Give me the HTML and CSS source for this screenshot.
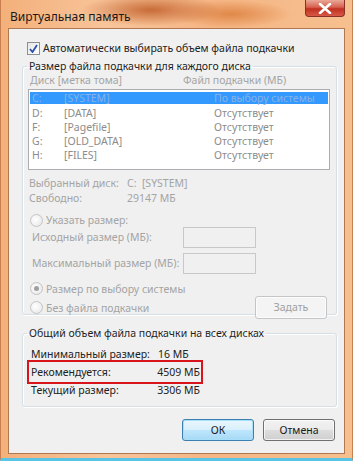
FILE: index.html
```html
<!DOCTYPE html>
<html lang="ru">
<head>
    <meta charset="UTF-8">
    <title>Виртуальная память</title>
    <link rel="stylesheet" href="styles.css">
</head>
<body>
    <div class="window">
        <div class="titlebar">
            <span class="title">Виртуальная память</span>
            <div class="close-btn">
                <svg width="14" height="11" viewBox="0 0 14 11">
                    <path d="M2 1 L12 10 M12 1 L2 10" stroke="#fff" stroke-width="2.6" stroke-linecap="round"/>
                </svg>
            </div>
        </div>

        <div class="client">
            <!-- auto checkbox -->
            <div class="check-row">
                <span class="checkbox">
                    <svg width="9" height="9" viewBox="0 0 9 9">
                        <path d="M1 5 L3.5 8 L8 1" stroke="#2a50a8" stroke-width="1.8" fill="none"/>
                    </svg>
                </span>
                <span>Автоматически выбирать объем файла подкачки</span>
            </div>

            <!-- per drive group -->
            <fieldset class="group group-drives">
                <legend>Размер файла подкачки для каждого диска</legend>
                <div class="list-head">
                    <span class="col-drive">Диск [метка тома]</span>
                    <span class="col-file">Файл подкачки (МБ)</span>
                </div>
                <div class="listbox">
                    <div class="list-row selected">
                        <span class="c1">C:</span><span class="c2">[SYSTEM]</span><span class="c3">По выбору системы</span>
                    </div>
                    <div class="list-row">
                        <span class="c1">D:</span><span class="c2">[DATA]</span><span class="c3">Отсутствует</span>
                    </div>
                    <div class="list-row">
                        <span class="c1">F:</span><span class="c2">[Pagefile]</span><span class="c3">Отсутствует</span>
                    </div>
                    <div class="list-row">
                        <span class="c1">G:</span><span class="c2">[OLD_DATA]</span><span class="c3">Отсутствует</span>
                    </div>
                    <div class="list-row">
                        <span class="c1">H:</span><span class="c2">[FILES]</span><span class="c3">Отсутствует</span>
                    </div>
                </div>

                <div class="info-row"><span class="info-label">Выбранный диск:</span><span>C:&nbsp; [SYSTEM]</span></div>
                <div class="info-row"><span class="info-label">Свободно:</span><span>29147 МБ</span></div>

                <div class="radio-row first">
                    <span class="radio"></span><span>Указать размер:</span>
                </div>
                <div class="size-row">
                    <span class="size-label">Исходный размер (МБ):</span>
                    <span class="textbox"></span>
                </div>
                <div class="size-row">
                    <span class="size-label">Максимальный размер (МБ):</span>
                    <span class="textbox"></span>
                </div>
                <div class="radio-row">
                    <span class="radio checked"></span><span>Размер по выбору системы</span>
                </div>
                <div class="radio-row last">
                    <span class="radio"></span><span>Без файла подкачки</span>
                    <span class="btn btn-set">Задать</span>
                </div>
            </fieldset>

            <!-- totals group -->
            <fieldset class="group group-total">
                <legend>Общий объем файла подкачки на всех дисках</legend>
                <div class="total-row"><span class="total-label">Минимальный размер:</span><span>16 МБ</span></div>
                <div class="total-row marked"><span class="total-label">Рекомендуется:</span><span>4509 МБ</span></div>
                <div class="total-row"><span class="total-label">Текущий размер:</span><span>3306 МБ</span></div>
            </fieldset>

            <div class="buttons">
                <span class="btn btn-ok">ОК</span>
                <span class="btn">Отмена</span>
            </div>
        </div>
    </div>
</body>
</html>
```

FILE: styles.css
```css
body {
    margin: 0;
    font-family: "Noto Sans", "DejaVu Sans", sans-serif;
    font-size: 10.5px;
    color: #222;
}

.window {
    width: 353px;
    height: 461px;
    box-sizing: border-box;
    background:
        radial-gradient(ellipse 70px 16px at 150px 10px, #c86c38 0%, rgba(200,108,56,0) 100%),
        radial-gradient(ellipse 60px 14px at 230px 14px, #e08848 0%, rgba(224,136,72,0) 100%),
        linear-gradient(to right, #f3b07a 0%, #f8c49a 30%, #f5b585 60%, #f6c08e 100%);
    border-bottom: 3px solid #58c4e6;
    border-left: 1px solid #c88050;
    border-right: 1px solid #c88050;
    display: flex;
    flex-direction: column;
}

/* Title bar */
.titlebar {
    height: 28px;
    display: flex;
    justify-content: space-between;
    align-items: flex-start;
    padding-left: 9px;
}
.title {
    margin-top: 8px;
    font-size: 12px;
    color: #1a1a1a;
}
.close-btn {
    width: 40px;
    height: 17px;
    margin-right: 7px;
    border: 1px solid #8a3028;
    border-top: none;
    border-radius: 0 0 4px 4px;
    background: linear-gradient(to bottom, #eaa898 0%, #d86050 45%, #c03020 55%, #d85848 100%);
    display: flex;
    align-items: center;
    justify-content: center;
    box-sizing: border-box;
}

/* Client area */
.client {
    flex: 1;
    margin: 0 7px 4px 7px;
    background: #f0f0f0;
    border: 1px solid #b07850;
    display: flex;
    flex-direction: column;
    padding: 0 7px 0 13px;
}

.check-row {
    display: flex;
    align-items: center;
    height: 14px;
    margin-top: 12px;
    padding-left: 5px;
    gap: 3px;
}
.checkbox {
    width: 11px;
    height: 11px;
    border: 1px solid #8e8f8f;
    background: linear-gradient(to bottom right, #e6e6e6, #ffffff);
    display: flex;
    align-items: center;
    justify-content: center;
}

/* Group boxes */
.group {
    margin: 0;
    border: 1px solid #d5dfe5;
    border-radius: 3px;
    box-shadow: inset 1px 1px 0 #fff, 1px 1px 0 #fff;
    padding: 0 6px 0 5px;
}
.group legend {
    padding: 0 2px;
    margin-left: -1px;
    font-size: 10.5px;
    color: #1e1e1e;
}
.group-drives {
    margin-top: 4px;
    height: 256px;
    box-sizing: border-box;
    color: #a4a4a4;
}

.list-head {
    display: flex;
    height: 14px;
    align-items: center;
    padding-left: 2px;
}
.col-drive {
    width: 153px;
}

.listbox {
    margin-top: 2px;
    height: 81px;
    box-sizing: border-box;
    border: 1px solid #abadb3;
    background: #fff;
    padding: 2px 1px;
    color: #8c8c8c;
}
.list-row {
    display: flex;
    height: 14px;
    align-items: center;
    padding-left: 2px;
    white-space: nowrap;
}
.list-row.selected {
    background: #3399ff;
    color: #86b2e6;
    height: 12px;
    margin-bottom: 2px;
}
.c1 { width: 32px; }
.c2 { width: 150px; }

.info-row {
    display: flex;
    height: 15px;
    align-items: center;
    padding-left: 1px;
}
.listbox + .info-row { margin-top: 5px; }
.info-label { width: 98px; }

.radio-row {
    display: flex;
    align-items: center;
    height: 19px;
    gap: 3px;
    padding-left: 2px;
    white-space: nowrap;
}
.radio-row.first {
    height: 8px;
    margin-top: 11px;
}
.size-row + .radio-row { margin-top: 3px; }
.radio {
    flex: none;
    width: 11px;
    height: 11px;
    border-radius: 50%;
    border: 1px solid #c4c4c4;
    background: radial-gradient(circle at 40% 40%, #ffffff, #e4e4e4);
    display: flex;
    align-items: center;
    justify-content: center;
}
.radio.checked::after {
    content: "";
    width: 5px;
    height: 5px;
    border-radius: 50%;
    background: #a0a0a0;
}

.size-row {
    display: flex;
    align-items: center;
    height: 26px;
    padding-left: 4px;
    white-space: nowrap;
}
.size-label { width: 151px; }
.textbox {
    width: 73px;
    height: 21px;
    border: 1px solid #c8c8c8;
    box-sizing: border-box;
    background: #f0f0f0;
}

/* Buttons */
.btn {
    display: flex;
    align-items: center;
    justify-content: center;
    width: 72px;
    height: 22px;
    box-sizing: border-box;
    border: 1px solid #707070;
    border-radius: 3px;
    background: linear-gradient(to bottom, #f2f2f2 0%, #ebebeb 48%, #dddddd 52%, #cfcfcf 100%);
    color: #1a1a1a;
    box-shadow: inset 0 0 0 1px rgba(255,255,255,0.7);
}
.btn-set {
    margin-left: auto;
    margin-right: 3px;
    margin-top: -1px;
    border-color: #c5c5c5;
    background: #f4f4f4;
    color: #a0a0a0;
    height: 23px;
}
.btn-ok {
    border-color: #3c7fb1;
    box-shadow: inset 0 0 0 1px #a8dff8;
    background: linear-gradient(to bottom, #eaf6fd 0%, #d9f0fc 48%, #bee6fd 52%, #a7d9f5 100%);
}

.group-total {
    margin-top: 11px;
    height: 81px;
    box-sizing: border-box;
    padding-top: 5px;
}
.total-row {
    display: flex;
    align-items: center;
    height: 18px;
    padding-left: 1px;
    margin-left: 2px;
    width: 170px;
    box-sizing: border-box;
    white-space: nowrap;
}
.total-label { width: 127px; }
.total-row.marked {
    outline: 2px solid #d8141c;
    outline-offset: 1px;
}

.buttons {
    display: flex;
    justify-content: flex-end;
    gap: 9px;
    margin-top: 12px;
    padding-right: 2px;
}
```
